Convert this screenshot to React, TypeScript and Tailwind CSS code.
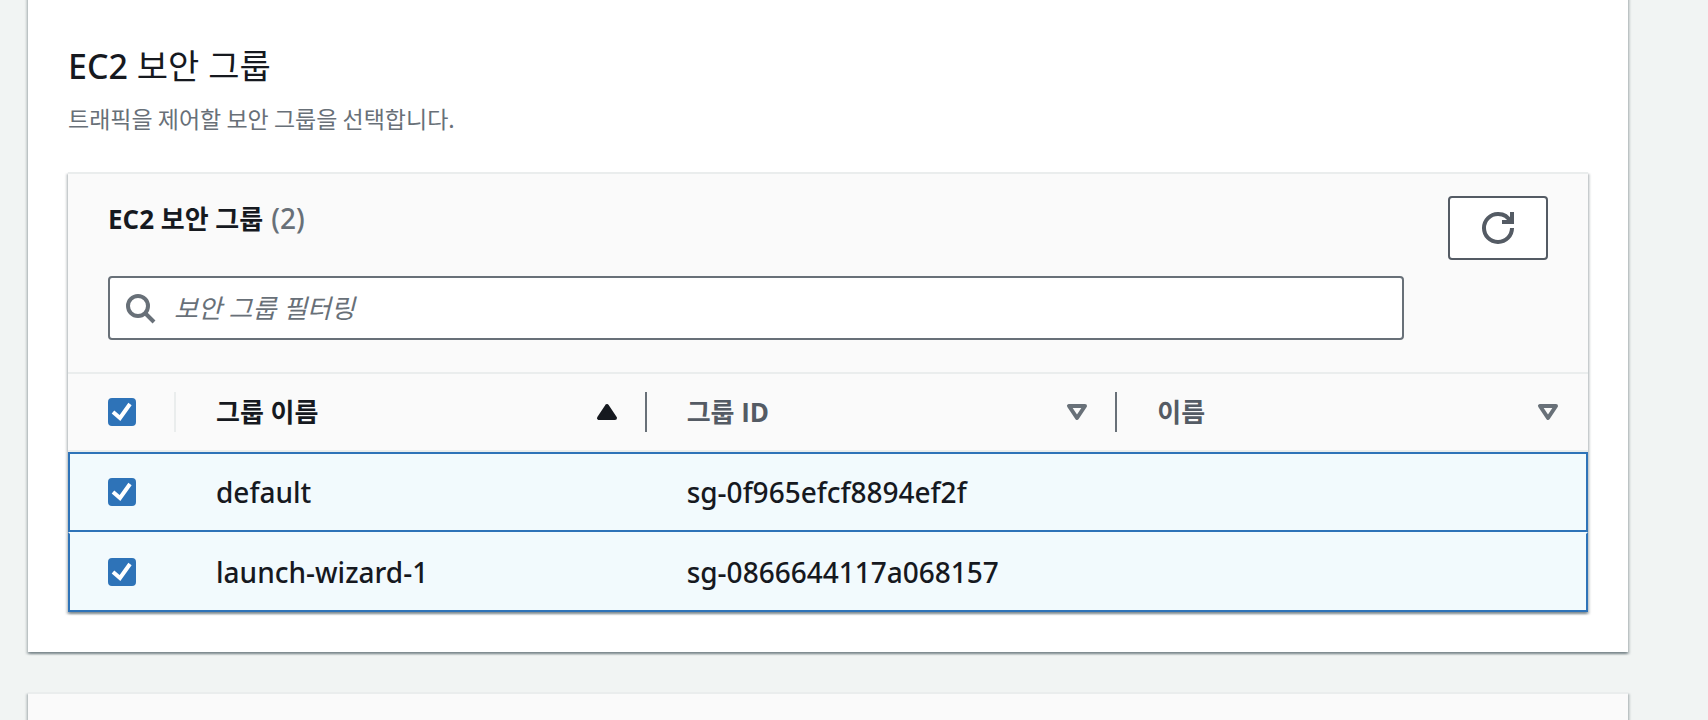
import { useState } from "react";
import clsx from "clsx";

type SecurityGroup = {
  name: string;
  id: string;
  label: string;
};

const groups: SecurityGroup[] = [
  { name: "default", id: "sg-0f965efcf8894ef2f", label: "" },
  { name: "launch-wizard-1", id: "sg-0866644117a068157", label: "" },
];

const columns = [
  { title: "그룹 이름", sorted: true },
  { title: "그룹 ID", sorted: false },
  { title: "이름", sorted: false },
];

const cardShadow =
  "shadow-[0_2px_2px_0_rgba(0,28,36,0.3),2px_2px_2px_0_rgba(0,28,36,0.15),-2px_2px_2px_0_rgba(0,28,36,0.15)]";

const headingFont = "font-['Open_Sans','Noto_Sans_CJK_KR',sans-serif]";

function RefreshIcon() {
  return (
    <svg viewBox="0 0 16 16" className="size-8" fill="none" stroke="currentColor" strokeWidth="2" aria-hidden="true">
      <path d="M10 5h5V0" />
      <path d="M15 8a6.957 6.957 0 0 1-7 7 6.957 6.957 0 0 1-7-7 6.957 6.957 0 0 1 7-7 6.87 6.87 0 0 1 6.3 4" />
    </svg>
  );
}

function SearchIcon() {
  return (
    <svg viewBox="0 0 16 16" className="size-8 shrink-0" fill="none" stroke="currentColor" strokeWidth="2" aria-hidden="true">
      <circle cx="7" cy="7" r="5" />
      <path d="m15 15-4.5-4.5" />
    </svg>
  );
}

function SortIcon({ sorted }: { sorted: boolean }) {
  return (
    <svg viewBox="0 0 16 16" className="size-8" stroke="currentColor" strokeWidth="2" strokeLinejoin="round" aria-hidden="true">
      {sorted ? <path d="M4 11h8L8 5z" fill="currentColor" /> : <path d="M4 5h8l-4 6z" fill="none" />}
    </svg>
  );
}

type CheckboxProps = {
  label: string;
  checked: boolean;
  onChange: () => void;
};

function Checkbox({ label, checked, onChange }: CheckboxProps) {
  return (
    <span className="grid size-7">
      <input
        type="checkbox"
        aria-label={label}
        checked={checked}
        onChange={onChange}
        className="col-start-1 row-start-1 size-7 appearance-none rounded-sm border-2 border-[#687078] bg-white checked:border-[#2e73b8] checked:bg-[#2e73b8]"
      />
      {checked && (
        <svg viewBox="0 0 14 14" className="pointer-events-none col-start-1 row-start-1 size-7" fill="none" stroke="#fff" strokeWidth="2" aria-hidden="true">
          <path d="m2.5 7 3.5 3 5-7" />
        </svg>
      )}
    </span>
  );
}

export default function App() {
  const [selected, setSelected] = useState<string[]>(groups.map((group) => group.id));
  const [filter, setFilter] = useState("");

  const visible = groups.filter((group) => group.name.includes(filter) || group.id.includes(filter));
  const allSelected = selected.length === groups.length;

  const toggle = (id: string) =>
    setSelected((ids) => (ids.includes(id) ? ids.filter((item) => item !== id) : [...ids, id]));

  return (
    <main className="flex min-h-screen flex-col gap-10 overflow-hidden bg-[#f1f4f3] pr-20 pl-7 font-['Noto_Sans','Noto_Sans_CJK_KR',sans-serif] text-[#16191f]">
      <section className={clsx("-mt-2 bg-white px-10 pt-12 pb-10", cardShadow)}>
        <h2 className="text-[34px] leading-[52px] font-medium">
          EC2 <span className="font-normal">보안 그룹</span>
        </h2>
        <p className="mt-2 font-['Noto_Sans_CJK_KR',sans-serif] text-[23px] leading-9 text-[#687078]">
          트래픽을 제어할 보안 그룹을 선택합니다.
        </p>

        <div className={clsx("mt-9 border-t-2 border-[#eaeded] bg-[#fafafa]", cardShadow)}>
          <div className="flex items-start gap-11 px-10 pt-[22px] pb-8">
            <div className="flex-1">
              <div className="flex h-11 items-baseline gap-2 leading-11">
                <h3 className={clsx("text-[26px] font-bold", headingFont)}>EC2 보안 그룹</h3>
                <span className="text-[28px] font-medium text-[#687078]">(2)</span>
              </div>
              <label className="mt-9 flex h-16 items-center gap-[18px] rounded border-2 border-[#687078] bg-white px-3.5 text-[#687078]">
                <SearchIcon />
                <input
                  type="search"
                  aria-label="보안 그룹 필터링"
                  placeholder="보안 그룹 필터링"
                  value={filter}
                  onChange={(event) => setFilter(event.target.value)}
                  className="min-w-0 flex-1 bg-transparent text-[26px] leading-10 text-[#16191f] outline-none placeholder:text-[#687078] placeholder:italic"
                />
              </label>
            </div>
            <button
              type="button"
              aria-label="새로 고침"
              className="flex h-16 w-[100px] items-center justify-center rounded border-2 border-[#545b64] bg-white text-[#545b64]"
            >
              <RefreshIcon />
            </button>
          </div>

          <table className="w-full table-fixed border-separate border-spacing-0 text-left">
            <thead>
              <tr>
                <th className="w-[108px] border-y-2 border-[#eaeded] py-[18px]">
                  <div className="flex h-10 items-center border-r-2 border-[#eaeded] pl-10">
                    <Checkbox
                      label="모두 선택"
                      checked={allSelected}
                      onChange={() => setSelected(allSelected ? [] : groups.map((group) => group.id))}
                    />
                  </div>
                </th>
                {columns.map((column, index) => (
                  <th
                    key={column.title}
                    aria-sort={column.sorted ? "ascending" : "none"}
                    className="border-y-2 border-[#eaeded] py-[18px]"
                  >
                    <div
                      className={clsx(
                        "flex h-10 items-center justify-between pl-10",
                        index < columns.length - 1 ? "border-r-2 border-[#687078] pr-[22px]" : "pr-6",
                        column.sorted ? "text-[#16191f]" : "text-[#545b64]",
                      )}
                    >
                      <span className={clsx("text-[26px] leading-10 font-bold", headingFont)}>{column.title}</span>
                      <button type="button" aria-label={`${column.title} 정렬`} className={column.sorted ? "" : "text-[#687078]"}>
                        <SortIcon sorted={column.sorted} />
                      </button>
                    </div>
                  </th>
                ))}
              </tr>
            </thead>
            <tbody>
              {visible.map((group, index) => {
                const cell = clsx(
                  "h-20 border-y-2",
                  selected.includes(group.id)
                    ? "border-b-[#2e73b8] bg-[#f2fafd]"
                    : "border-b-[#eaeded] bg-white",
                  selected.includes(group.id) && index === 0 ? "border-t-[#2e73b8]" : "border-t-[#f2fafd]",
                );
                return (
                  <tr key={group.id} className="text-[28px] leading-10 font-medium">
                    <td className={clsx(cell, "border-l-2 border-l-[#2e73b8] pl-[38px]")}>
                      <Checkbox
                        label={group.name}
                        checked={selected.includes(group.id)}
                        onChange={() => toggle(group.id)}
                      />
                    </td>
                    <td className={clsx(cell, "pl-10")}>{group.name}</td>
                    <td className={clsx(cell, "pl-10")}>{group.id}</td>
                    <td className={clsx(cell, "border-r-2 border-r-[#2e73b8] pl-10")}>{group.label}</td>
                  </tr>
                );
              })}
            </tbody>
          </table>
        </div>
      </section>

      <section className={clsx("min-h-7 flex-1 border-t-2 border-[#eaeded] bg-[#fafafa]", cardShadow)} />
    </main>
  );
}
